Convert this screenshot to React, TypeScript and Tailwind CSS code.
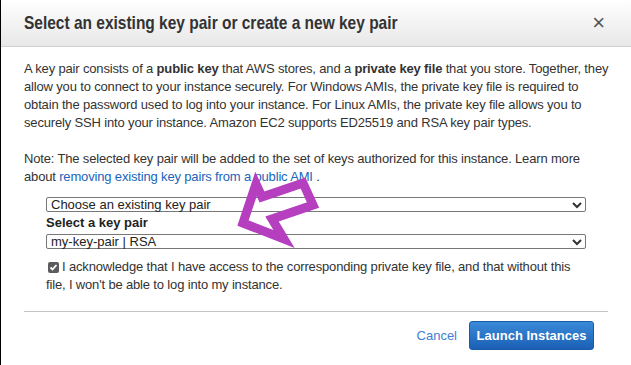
import React from "react";

function Chevron() {
  return (
    <svg width="10" height="7" viewBox="0 0 10 7" className="absolute right-[3px] top-[4px]">
      <polyline points="1,1 5,5 9,1" fill="none" stroke="#333" strokeWidth="2" />
    </svg>
  );
}

function FakeSelect({ text }: { text: string }) {
  return (
    <div className="relative h-[15px] w-[540px] border border-[#777] rounded-[2px] bg-white pl-[4px] text-[13px] leading-[13px] text-[#222]">
      {text}
      <Chevron />
    </div>
  );
}

export default function App() {
  return (
    <div
      className="relative w-[631px] h-[365px] bg-white border-l border-black overflow-hidden text-[#333]"
      style={{ fontFamily: '"Liberation Sans", Arial, sans-serif' }}
    >
      <div className="h-[47px] bg-gradient-to-b from-white to-[#e8e8e8] border-b border-[#d0d0d0] flex items-center justify-between pl-[23px] pr-[26px]">
        <div className="text-[19px] font-bold text-[#333] whitespace-nowrap origin-left scale-x-[0.815]">
          Select an existing key pair or create a new key pair
        </div>
        <div className="text-[22px] text-[#555] leading-none">×</div>
      </div>

      <div className="pl-[23px] pr-[23px] pt-[13px] text-[13px] leading-[18px] tracking-[-0.16px] whitespace-nowrap">
        <p>
          A key pair consists of a <b>public key</b> that AWS stores, and a <b>private key file</b> that you store. Together, they
          <br />
          allow you to connect to your instance securely. For Windows AMIs, the private key file is required to
          <br />
          obtain the password used to log into your instance. For Linux AMIs, the private key file allows you to
          <br />
          securely SSH into your instance. Amazon EC2 supports ED25519 and RSA key pair types.
        </p>
        <p className="mt-[18px]">
          Note: The selected key pair will be added to the set of keys authorized for this instance. Learn more
          <br />
          about <span className="text-[#1a64ba]">removing existing key pairs from a public AMI</span> .
        </p>

        <div className="pl-[22px] mt-[11px] tracking-normal">
          <FakeSelect text="Choose an existing key pair" />
          <div className="font-bold h-[22px] leading-[21px] text-[#222]">Select a key pair</div>
          <FakeSelect text="my-key-pair | RSA" />
          <div className="mt-[9px] leading-[18px] text-[#333] tracking-[-0.16px]">
            <span className="inline-flex w-[11px] h-[11px] bg-[#5c5c5c] rounded-[2px] items-center justify-center align-[-1px] ml-[2px] mr-[3px]">
              <svg width="9" height="9" viewBox="0 0 9 9">
                <polyline points="1.5,4.5 3.5,6.5 7.5,2" fill="none" stroke="white" strokeWidth="1.8" />
              </svg>
            </span>
            I acknowledge that I have access to the corresponding private key file, and that without this
            <br />
            file, I won't be able to log into my instance.
          </div>
        </div>

        <div className="mt-[17px] border-t border-[#c4c4c4] w-[584px]" />
        <div className="flex justify-end items-center pr-[14px] pt-[9px] gap-[12px] tracking-normal">
          <span className="text-[#3f7fd4] text-[13px]">Cancel</span>
          <button className="h-[29px] w-[125px] rounded-[3px] border border-[#1a5aa6] bg-gradient-to-b from-[#3a8ad9] to-[#1b60b5] text-white font-bold text-[13px]">
            Launch Instances
          </button>
        </div>
      </div>

      <svg className="absolute left-0 top-0 pointer-events-none" width="631" height="365" viewBox="0 0 631 365">
        <polygon
          points="242,223 255,184 261,197 302,183 312,205 271,219 283,239"
          fill="none"
          stroke="#b53fbf"
          strokeWidth="9"
          strokeLinejoin="miter"
        />
      </svg>
    </div>
  );
}
